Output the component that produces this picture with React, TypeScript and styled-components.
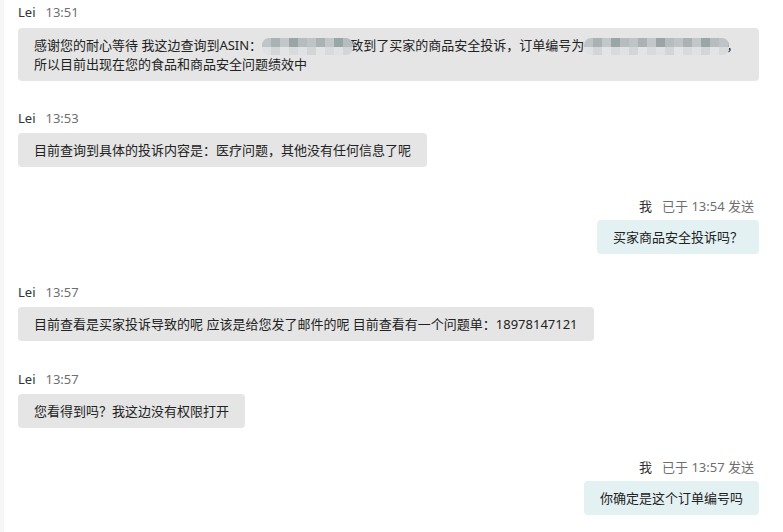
import React from 'react';
import styled, { createGlobalStyle } from 'styled-components';

const GlobalStyle = createGlobalStyle`
    html, body {
        margin: 0;
        padding: 0;
        background: #fff;
    }
    body {
        font-family: "Noto Sans", "Noto Sans CJK SC", sans-serif;
        color: #232f3e;
    }
`

const Page = styled.div`
    width: 783px;
    height: 532px;
    display: flex;
    overflow: hidden;
    background: #fff;
`
const Edge = styled.div`
    width: 4px;
    flex-shrink: 0;
    background: #f6f6f6;
`
const Thread = styled.div`
    flex: 1;
    display: flex;
    flex-direction: column;
    gap: 28px;
    padding: 2px 24px 0 14px;
`
const Message = styled.div<{ $mine?: boolean }>`
    display: flex;
    flex-direction: column;
    align-items: ${p => (p.$mine ? 'flex-end' : 'flex-start')};
    gap: 5px;
`
const Header = styled.div<{ $mine?: boolean }>`
    display: flex;
    align-items: center;
    gap: 10px;
    height: 20px;
    font-size: 13px;
    padding-right: ${p => (p.$mine ? '5px' : '0')};
`
const Sender = styled.span`
    color: #333;
`
const Time = styled.span`
    color: #6f6f6f;
`
const Bubble = styled.div<{ $mine?: boolean }>`
    background: ${p => (p.$mine ? '#e4f1f3' : '#e5e5e5')};
    border-radius: 4px;
    padding: 8px 16px;
    font-size: 13px;
    line-height: 18px;
    color: #222;
`
const Wide = styled(Bubble)`
    align-self: stretch;
    margin-top: 1px;
    margin-bottom: -1px;
`
const Blur = styled.span<{ $w: number }>`
    display: inline-block;
    width: ${p => p.$w}px;
    height: 17px;
    margin-right: -3px;
    vertical-align: -5px;
    border-radius: 7px;
    filter: blur(0.6px);
    background:
        repeating-linear-gradient(90deg, #dfe2e2 0 9px, #d2d6d7 9px 18px, #e3e5e5 18px 27px, #d7dbdb 27px 36px) 0 9px / 100% 8px no-repeat,
        repeating-linear-gradient(90deg, #bfc5c7 0 9px, #aab2b6 9px 18px, #c2c7c9 18px 27px, #9aa5a6 27px 36px, #b6bdbf 36px 45px) 0 0 / 100% 9px no-repeat;
`

const Other: React.FC<{ time: string; children: React.ReactNode; wide?: boolean }> = ({ time, children, wide }) => (
    <Message>
        <Header>
            <Sender>Lei</Sender>
            <Time>{time}</Time>
        </Header>
        {wide ? <Wide>{children}</Wide> : <Bubble>{children}</Bubble>}
    </Message>
)

const Mine: React.FC<{ time: string; children: React.ReactNode }> = ({ time, children }) => (
    <Message $mine>
        <Header $mine>
            <Sender>我</Sender>
            <Time>已于 {time} 发送</Time>
        </Header>
        <Bubble $mine>{children}</Bubble>
    </Message>
)

const App: React.FC = () => {
    return (
        <Page>
            <GlobalStyle />
            <Edge />
            <Thread>
                <Other time="13:51" wide>
                    感谢您的耐心等待 我这边查询到ASIN：<Blur $w={91} />致到了买家的商品安全投诉，订单编号为<Blur $w={145} />，
                    <br />
                    所以目前出现在您的食品和商品安全问题绩效中
                </Other>
                <Other time="13:53">目前查询到具体的投诉内容是：医疗问题，其他没有任何信息了呢</Other>
                <Mine time="13:54">买家商品安全投诉吗？</Mine>
                <Other time="13:57">目前查看是买家投诉导致的呢 应该是给您发了邮件的呢 目前查看有一个问题单：18978147121</Other>
                <Other time="13:57">您看得到吗？我这边没有权限打开</Other>
                <Mine time="13:57">你确定是这个订单编号吗</Mine>
            </Thread>
        </Page>
    );
};

export default App;
